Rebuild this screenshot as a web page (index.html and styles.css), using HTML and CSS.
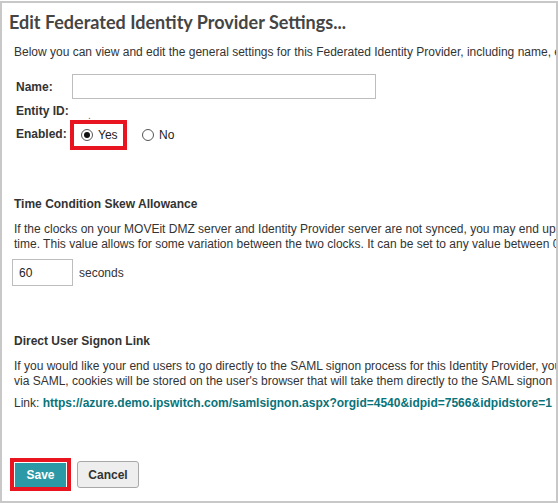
FILE: index.html
```html
<!DOCTYPE html>
<html>
<head>
<meta charset="utf-8">
<link rel="stylesheet" href="styles.css">
</head>
<body>
<div class="frame">
  <h1 class="title">Edit Federated Identity Provider Settings...</h1>
  <p class="line intro">Below you can view and edit the general settings for this Federated Identity Provider, including name, e</p>

  <div class="row row-name">
    <span class="label">Name:</span>
    <span class="textbox wide"></span>
  </div>
  <div class="row row-entity">
    <span class="label">Entity ID:</span>
    <span class="dot">.</span>
  </div>
  <div class="row row-enabled">
    <span class="label">Enabled:</span>
    <span class="highlight hl-yes">
      <span class="radio checked"></span><span class="opt">Yes</span>
    </span>
    <span class="radio no-radio"></span><span class="opt">No</span>
  </div>

  <h2 class="heading h-time">Time Condition Skew Allowance</h2>
  <p class="para">If the clocks on your MOVEit DMZ server and Identity Provider server are not synced, you may end up<br>time. This value allows for some variation between the two clocks. It can be set to any value between 0</p>
  <div class="row row-seconds">
    <span class="textbox small">60</span>
    <span class="unit">seconds</span>
  </div>

  <h2 class="heading h-link">Direct User Signon Link</h2>
  <p class="para">If you would like your end users to go directly to the SAML signon process for this Identity Provider, you<br>via SAML, cookies will be stored on the user's browser that will take them directly to the SAML signon p</p>
  <p class="line link-line">Link: <span class="url">https://azure.demo.ipswitch.com/samlsignon.aspx?orgid=4540&amp;idpid=7566&amp;idpidstore=1</span></p>

  <div class="buttons">
    <span class="highlight hl-save"><span class="btn btn-save">Save</span></span>
    <span class="btn btn-cancel">Cancel</span>
  </div>
</div>
</body>
</html>
```

FILE: styles.css
```css
html, body {
  margin: 0;
  padding: 0;
  background: #fff;
}
body {
  font-family: "Liberation Sans", Arial, sans-serif;
  font-size: 12px;
  color: #333;
  width: 558px;
  height: 503px;
  overflow: hidden;
}
.frame {
  margin-top: 1px;
  box-sizing: border-box;
  width: 558px;
  height: 502px;
  border: 2px solid #c8c8c8;
  padding: 8px 0 0 7px;
  overflow: hidden;
}
.title {
  margin: 0;
  font-family: "Lato", "DejaVu Sans", sans-serif;
  font-weight: 700;
  font-size: 18px;
  line-height: 22px;
  color: #454545;
  white-space: nowrap;
}
.line, .para {
  margin: 0;
  line-height: 15px;
  white-space: nowrap;
  padding-left: 5px;
}
.intro {
  margin-top: 12px;
}
.row {
  display: flex;
  align-items: center;
  padding-left: 7px;
}
.label {
  font-weight: 700;
  width: 56px;
  flex: none;
}
.row-name {
  margin-top: 14px;
  height: 25px;
}
.textbox {
  box-sizing: border-box;
  display: flex;
  align-items: center;
  border: 1px solid #bdbdbd;
  background: #fff;
  color: #222;
}
.wide {
  width: 304px;
  height: 25px;
}
.row-entity {
  margin-top: 4px;
  height: 16px;
}
.dot {
  margin-left: 16px;
  margin-top: 8px;
  font-size: 10px;
  color: #666;
}
.row-enabled {
  margin-top: 1px;
  height: 30px;
}
.row-enabled .label {
  width: 54px;
  align-self: center;
  margin-top: -3px;
}
.highlight {
  box-sizing: border-box;
  display: inline-flex;
  align-items: center;
  border: 4px solid #e8141f;
}
.hl-yes {
  width: 57px;
  height: 30px;
  padding-left: 7px;
}
.radio {
  box-sizing: border-box;
  width: 12px;
  height: 12px;
  border: 1px solid #555;
  border-radius: 50%;
  background: #fff;
  display: inline-flex;
  align-items: center;
  justify-content: center;
  flex: none;
}
.radio.checked::after {
  content: "";
  width: 6px;
  height: 6px;
  border-radius: 50%;
  background: #111;
}
.opt {
  margin-left: 5px;
  color: #222;
}
.no-radio {
  margin-left: 15px;
}
.heading {
  margin: 0;
  font-size: 12px;
  font-weight: 700;
  line-height: 15px;
  padding-left: 5px;
  color: #333;
}
.h-time {
  margin-top: 47px;
}
.h-time + .para,
.h-link + .para {
  margin-top: 10px;
}
.row-seconds {
  margin-top: 7px;
  padding-left: 3px;
  height: 27px;
}
.small {
  width: 61px;
  height: 27px;
  padding-left: 6px;
  font-size: 12px;
}
.unit {
  margin-left: 6px;
}
.h-link {
  margin-top: 48px;
}
.link-line {
  margin-top: 7px;
}
.url {
  font-weight: 700;
  color: #08737a;
}
.buttons {
  margin-top: 47px;
  padding-left: 1px;
  display: flex;
  align-items: center;
}
.hl-save {
  width: 61px;
  height: 33px;
  padding: 1px;
}
.btn {
  box-sizing: border-box;
  display: inline-flex;
  align-items: center;
  justify-content: center;
  font-weight: 700;
  font-size: 12px;
}
.btn-save {
  width: 51px;
  height: 24px;
  background: #2b9aa6;
  color: #fff;
}
.btn-cancel {
  margin-left: 6px;
  width: 62px;
  height: 27px;
  background: #eeeeee;
  border: 1px solid #a8a8a8;
  border-radius: 3px;
  color: #333;
}
```
